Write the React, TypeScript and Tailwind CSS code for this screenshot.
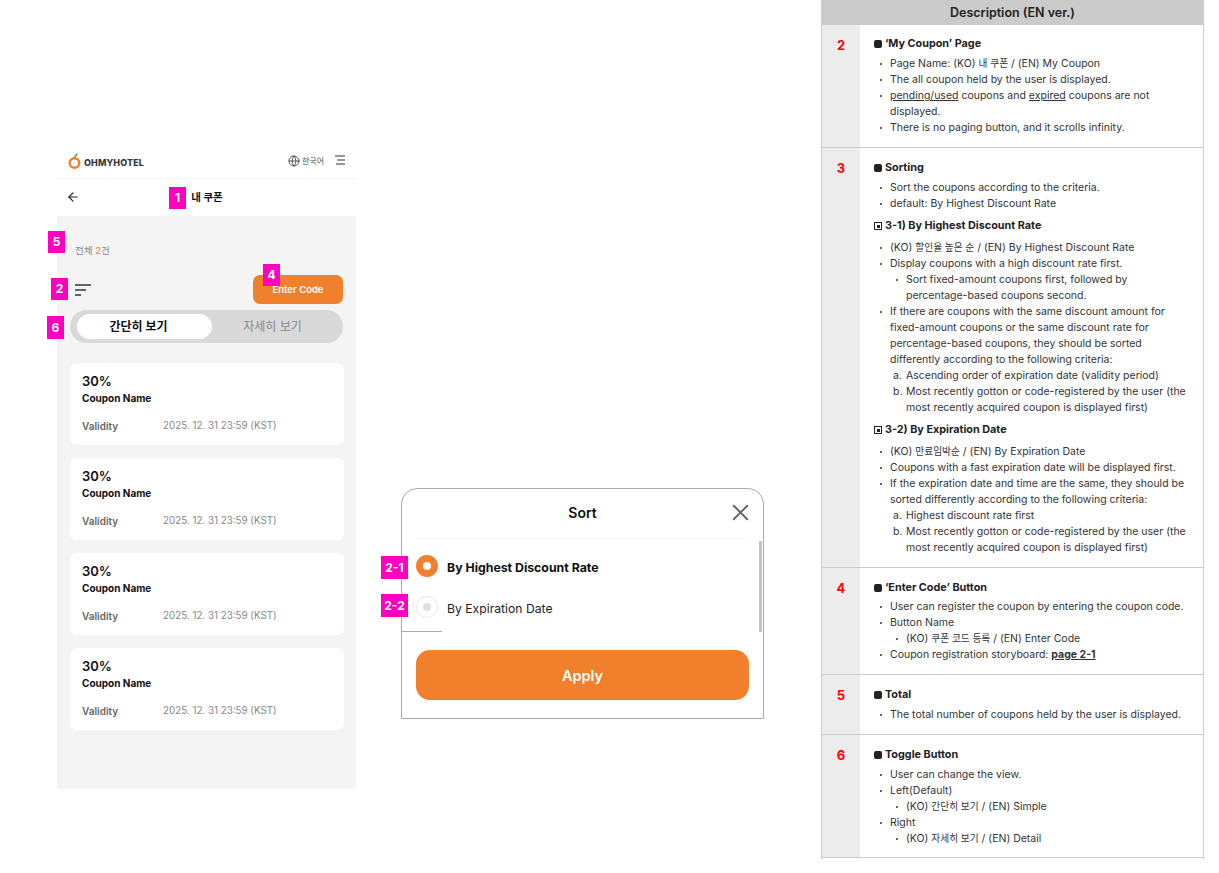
import React from "react";
import { ArrowLeft, Globe, X } from "lucide-react";

const Badge = ({ label, className }: { label: string; className: string }) => (
  <span
    className={`absolute flex items-center justify-center bg-[#ff00c0] text-white font-bold text-[12px] ${className}`}
  >
    {label}
  </span>
);

const Logo = () => (
  <div className="flex items-center gap-[3px]">
    <svg width="13" height="18" viewBox="0 0 13 18">
      <circle cx="6.5" cy="11" r="4.8" fill="none" stroke="#f0802c" strokeWidth="2.4" />
      <path d="M6 5.5 C6.5 3.5 8 2 9.5 1 C9.8 3 8.5 5 6 5.5Z" fill="#4a8f3c" />
    </svg>
    <span className="text-[9px] font-extrabold tracking-[0.1px] text-[#3a3a3a] leading-none mt-[4px]">
      OHMYHOTEL
    </span>
  </div>
);

const CouponCard = () => (
  <div className="bg-white rounded-[7px] h-[82px] px-3 pt-[10px]">
    <p className="text-[13px] font-semibold leading-4 text-[#111]">30%</p>
    <p className="text-[10px] font-bold leading-4 text-[#111] mt-[1px]">Coupon Name</p>
    <div className="flex mt-[12px] text-[10px] leading-4">
      <span className="w-[81px] font-semibold text-[#666]">Validity</span>
      <span className="text-[9.8px] text-[#888]">2025. 12. 31 23:59 (KST)</span>
    </div>
  </div>
);

const MobileScreen = () => (
  <div className="relative w-[299px] h-[646px] bg-white flex flex-col">
    <header className="h-[36px] flex items-center justify-between pl-[11px] pr-[11px] border-b border-[#f3f3f3] shrink-0">
      <Logo />
      <div className="flex items-center gap-[11px]">
        <div className="flex items-center gap-[2px] text-[8px] text-[#555]">
          <Globe size={12} strokeWidth={1.6} className="text-[#333]" />
          <span>한국어</span>
        </div>
        <svg width="10" height="10" viewBox="0 0 10 10" className="mb-[2px]">
          <path d="M0 1H10M2 5H10M1 9H10" stroke="#333" strokeWidth="1.2" fill="none" />
        </svg>
      </div>
    </header>
    <div className="h-[37px] relative flex items-center justify-center shrink-0">
      <ArrowLeft size={14} strokeWidth={2} className="absolute left-[9px] top-[11px] text-[#222]" />
      <span className="text-[10.5px] font-bold text-[#111] ml-[1px]">내 쿠폰</span>
      <Badge label="1" className="left-[112px] top-[8px] w-[17px] h-[22px]" />
    </div>
    <main className="flex-1 bg-[#f4f4f4] px-[13px] relative">
      <p className="text-[9.5px] text-[#888] pl-[5px] pt-[29px] leading-[12px]">
        전체 <span className="text-[#f0802c]">2</span>건
      </p>
      <Badge label="5" className="left-[-9px] top-[15px] w-[17px] h-[22px]" />
      <div className="flex items-center justify-between mt-[18px] h-[29px]">
        <svg width="16" height="12" viewBox="0 0 16 12" className="ml-[5px]">
          <path d="M0 1H16M0 6H11M0 11H6" stroke="#333" strokeWidth="1.5" fill="none" />
        </svg>
        <button className="w-[90px] h-[29px] pt-[1px] rounded-[7px] bg-[#f0802c] text-white text-[9.5px] font-semibold">
          Enter Code
        </button>
      </div>
      <Badge label="2" className="left-[-6px] top-[62px] w-[17px] h-[22px]" />
      <Badge label="4" className="left-[206px] top-[48px] w-[17px] h-[22px]" />
      <div className="mt-[6px] h-[33px] rounded-full bg-[#d9d9d9] p-[4px] px-[7px] flex">
        <div className="w-[135px] pr-[12px] rounded-full bg-white flex items-center justify-center text-[12px] font-bold text-[#111]">
          간단히 보기
        </div>
        <div className="flex-1 pr-[3px] flex items-center justify-center text-[12px] text-[#888]">
          자세히 보기
        </div>
      </div>
      <Badge label="6" className="left-[-10px] top-[100px] w-[17px] h-[23px]" />
      <div className="flex flex-col gap-[13px] mt-[20px] mr-[-1px]">
        <CouponCard />
        <CouponCard />
        <CouponCard />
        <CouponCard />
      </div>
    </main>
  </div>
);

const SortSheet = () => (
  <div className="relative w-[363px] h-[231px] bg-white border border-[#aaa] rounded-t-[16px] flex flex-col">
    <div className="mx-[14px] h-[50px] pb-[2px] flex items-center justify-center border-b border-[#f5f5f5] relative shrink-0">
      <span className="text-[14px] font-semibold text-[#111]">Sort</span>
      <X size={27} strokeWidth={1.7} className="absolute right-[-5px] top-[10px] text-[#666]" />
    </div>
    <div className="flex items-center gap-[9px] ml-[14px] mt-[16px] h-[22px]">
      <span className="w-[22px] h-[22px] rounded-full bg-[#f0802c] flex items-center justify-center">
        <span className="w-[8px] h-[8px] rounded-full bg-white" />
      </span>
      <span className="text-[12.3px] font-bold text-[#111] pt-[4px]">By Highest Discount Rate</span>
    </div>
    <div className="flex items-center gap-[9px] ml-[14px] mt-[19px] h-[22px]">
      <span className="w-[22px] h-[22px] rounded-full border border-[#e6e6e6] flex items-center justify-center">
        <span className="w-[8px] h-[8px] rounded-full bg-[#e0e0e0]" />
      </span>
      <span className="text-[12.2px] text-[#222] pt-[4px]">By Expiration Date</span>
    </div>
    <div className="w-[40px] h-px bg-[#aaa] mt-[13px]" />
    <button className="mx-[14px] mt-[18px] h-[50px] pt-[2px] rounded-[14px] bg-[#f0802c] text-white text-[14.5px] font-semibold">
      Apply
    </button>
    <span className="absolute right-[1px] top-[52px] w-[3px] h-[91px] bg-[#c4c4c4]" />
    <Badge label="2-1" className="left-[-21px] top-[67px] w-[27px] h-[23px]" />
    <Badge label="2-2" className="left-[-21px] top-[105px] w-[27px] h-[23px]" />
  </div>
);

const Ko = ({ children }: { children: React.ReactNode }) => (
  <span className="text-[9.7px]">{children}</span>
);

const Li = ({ children, sub }: { children: React.ReactNode; sub?: boolean }) => (
  <li className={`flex ${sub ? "pl-[16px] pr-[8px]" : ""}`}>
    <span className="w-[16px] shrink-0 pl-[6px] pt-[7px]">
      <span className="block w-[2px] h-[2px] rounded-full bg-[#333]" />
    </span>
    <span>{children}</span>
  </li>
);

const Alpha = ({ mark, children }: { mark: string; children: React.ReactNode }) => (
  <li className="flex pl-[16px]">
    <span className="w-[16px] shrink-0 pl-[3px]">{mark}</span>
    <span>{children}</span>
  </li>
);

const Heading = ({ children }: { children: React.ReactNode }) => (
  <h3 className="flex items-center gap-[3px] font-bold text-[10.8px] text-[#222] mb-[4px]">
    <span className="w-[8px] h-[8px] rounded-[2px] bg-[#222]" />
    {children}
  </h3>
);

const SubHeading = ({ children }: { children: React.ReactNode }) => (
  <h4 className="flex items-center gap-[3px] font-bold text-[10.8px] text-[#222] mt-[6px] mb-[6px]">
    <span className="w-[8px] h-[8px] border border-[#222] flex items-center justify-center">
      <span className="w-[3px] h-[3px] bg-[#222]" />
    </span>
    {children}
  </h4>
);

const Row = ({
  num,
  h,
  pt = "pt-[12px]",
  children,
}: {
  num: string;
  h: string;
  pt?: string;
  children: React.ReactNode;
}) => (
  <div className={`flex border-b border-[#ccc] ${h}`}>
    <div className="w-[38px] shrink-0 bg-[#ececec] text-center text-[#f00] font-bold text-[13px] pt-[12px] leading-4">
      {num}
    </div>
    <div className={`flex-1 pl-[14px] pr-[10px] ${pt}`}>{children}</div>
  </div>
);

const DescriptionTable = () => (
  <div className="w-[383px] h-[859px] border-x border-[#ccc] text-[10.5px] leading-4 text-[#333] flex flex-col">
    <div className="h-[25px] bg-[#cbcbcb] flex items-center justify-center font-semibold text-[12.5px] text-[#222]">
      Description (EN ver.)
    </div>
    <Row num="2" h="h-[123px]" pt="pt-[11px]">
      <Heading>‘My Coupon’ Page</Heading>
      <ul>
        <Li>
          Page Name: (KO) <Ko>내 쿠폰</Ko> / (EN) My Coupon
        </Li>
        <Li>The all coupon held by the user is displayed.</Li>
        <Li>
          <span className="underline">pending/used</span> coupons and{" "}
          <span className="underline">expired</span> coupons are not displayed.
        </Li>
        <Li>There is no paging button, and it scrolls infinity.</Li>
      </ul>
    </Row>
    <Row num="3" h="h-[420px]">
      <Heading>Sorting</Heading>
      <ul>
        <Li>Sort the coupons according to the criteria.</Li>
        <Li>default: By Highest Discount Rate</Li>
      </ul>
      <SubHeading>3-1) By Highest Discount Rate</SubHeading>
      <ul>
        <Li>
          (KO) <Ko>할인율 높은 순</Ko> / (EN) By Highest Discount Rate
        </Li>
        <Li>Display coupons with a high discount rate first.</Li>
        <Li sub>Sort fixed-amount coupons first, followed by percentage-based coupons second.</Li>
        <Li>
          If there are coupons with the same discount amount for fixed-amount coupons or the same
          discount rate for percentage-based coupons, they should be sorted differently according
          to the following criteria:
        </Li>
        <Alpha mark="a.">Ascending order of expiration date (validity period)</Alpha>
        <Alpha mark="b.">
          Most recently gotton or code-registered by the user (the most recently acquired coupon is
          displayed first)
        </Alpha>
      </ul>
      <SubHeading>3-2) By Expiration Date</SubHeading>
      <ul>
        <Li>
          (KO) <Ko>만료임박순</Ko> / (EN) By Expiration Date
        </Li>
        <Li>Coupons with a fast expiration date will be displayed first.</Li>
        <Li>
          If the expiration date and time are the same, they should be sorted differently according
          to the following criteria:
        </Li>
        <Alpha mark="a.">Highest discount rate first</Alpha>
        <Alpha mark="b.">
          Most recently gotton or code-registered by the user (the most recently acquired coupon is
          displayed first)
        </Alpha>
      </ul>
    </Row>
    <Row num="4" h="h-[107px]">
      <Heading>‘Enter Code’ Button</Heading>
      <ul className="-mt-px">
        <Li>User can register the coupon by entering the coupon code.</Li>
        <Li>Button Name</Li>
        <Li sub>
          (KO) <Ko>쿠폰 코드 등록</Ko> / (EN) Enter Code
        </Li>
        <Li>
          Coupon registration storyboard: <span className="font-bold underline">page 2-1</span>
        </Li>
      </ul>
    </Row>
    <Row num="5" h="h-[60px]">
      <Heading>Total</Heading>
      <ul>
        <Li>The total number of coupons held by the user is displayed.</Li>
      </ul>
    </Row>
    <Row num="6" h="h-[123px]">
      <Heading>Toggle Button</Heading>
      <ul>
        <Li>User can change the view.</Li>
        <Li>Left(Default)</Li>
        <Li sub>
          (KO) <Ko>간단히 보기</Ko> / (EN) Simple
        </Li>
        <Li>Right</Li>
        <Li sub>
          (KO) <Ko>자세히 보기</Ko> / (EN) Detail
        </Li>
      </ul>
    </Row>
  </div>
);

export default function App() {
  return (
    <div className="w-[1219px] h-[873px] bg-white overflow-hidden flex items-start font-['Inter','Noto_Sans_CJK_KR',sans-serif]">
      <div className="ml-[57px] mt-[143px]">
        <MobileScreen />
      </div>
      <div className="ml-[45px] mt-[488px]">
        <SortSheet />
      </div>
      <div className="ml-[57px]">
        <DescriptionTable />
      </div>
    </div>
  );
}
